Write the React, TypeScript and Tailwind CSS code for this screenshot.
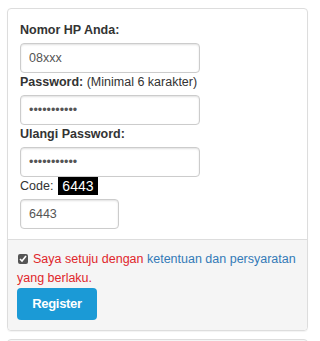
import React from "react";

const inputCls =
  "block h-[30px] rounded-[4px] border border-[#cccccc] bg-white px-[8px] text-[12.5px] text-[#555555] shadow-[inset_0_1px_2px_rgba(0,0,0,0.12)] outline-none";

export default function App() {
  return (
    <div className="h-[341px] overflow-hidden bg-white pt-[8px] font-['Liberation_Sans',Arial,sans-serif] text-[12.5px] text-[#333333]">
      <div className="mx-[7px] w-[301px] rounded-[4px] border border-[#dddddd] shadow-[0_1px_1px_rgba(0,0,0,0.05)]">
        <div className="px-[12px] pt-[12px] pb-[10px]">
          <label className="block font-bold leading-[18px]">Nomor HP Anda:</label>
          <input className={inputCls + " mt-[4px] w-[180px]"} defaultValue="08xxx" />
          <label className="block leading-[18px]">
            <b>Password:</b> (Minimal 6 karakter)
          </label>
          <input type="password" className={inputCls + " mt-[4px] w-[180px] text-[9px]"} defaultValue="abcdefghijk" />
          <label className="block font-bold leading-[18px]">Ulangi Password:</label>
          <input type="password" className={inputCls + " mt-[4px] w-[180px] text-[9px]"} defaultValue="abcdefghijk" />
          <div className="flex items-center leading-[18px]">
            <span>Code:</span>
            <span className="ml-[5px] bg-black px-[4px] text-[14px] leading-[18px] text-white">6443</span>
          </div>
          <input className={inputCls + " mt-[4px] w-[99px]"} defaultValue="6443" />
        </div>
        <div className="rounded-b-[4px] border-t border-[#dddddd] bg-[#f5f5f5] px-[9px] pt-[10px] pb-[10px]">
          <p className="leading-[19px] text-[#e0262b]">
            <input type="checkbox" defaultChecked className="mr-[5px] ml-[1px] h-[10px] w-[10px] align-[-1px] accent-[#555555]" />
            Saya setuju dengan <a className="text-[#337ab7]">ketentuan dan persyaratan</a> yang berlaku.
          </p>
          <button className="mt-[0px] h-[32px] w-[80px] rounded-[4px] bg-[#1b9ad6] text-[13px] font-bold tracking-[-0.3px] text-white">
            Register
          </button>
        </div>
      </div>
      <div className="mx-[7px] mt-[8px] h-[20px] w-[301px] rounded-t-[4px] border border-[#dddddd] bg-[#f5f5f5]" />
    </div>
  );
}
